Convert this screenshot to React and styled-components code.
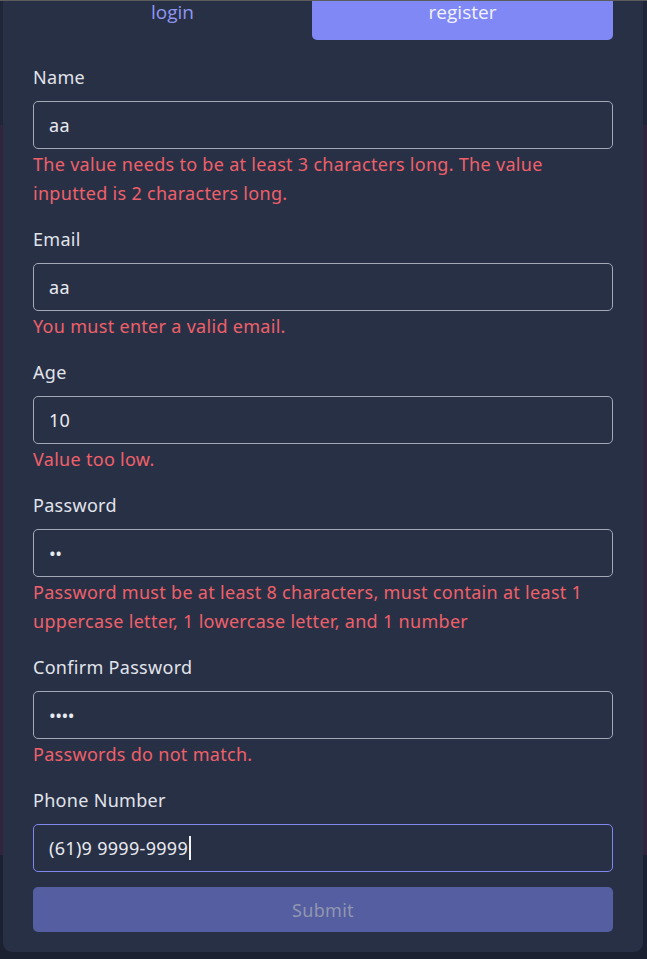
import React from "react";
import styled, { createGlobalStyle } from "styled-components";

const GlobalStyle = createGlobalStyle`
  html, body {
    margin: 0;
    padding: 0;
    background: #1b2130;
  }
  body {
    font-family: "Noto Sans", "Open Sans", sans-serif;
    border-top: 1px solid #5c5c5c;
  }
`;

// Backdrop behind the modal
const Backdrop = styled.div`
  width: 647px;
  height: 958px;
  box-sizing: border-box;
  padding: 0 4px 0 3px;
  background: linear-gradient(
    to bottom,
    #1f2637 0,
    #1f2637 124px,
    #31243d 124px,
    #31243d 854px,
    #1b2130 854px
  );
`;

const Modal = styled.div`
  background: #283046;
  border-radius: 0 0 9px 9px;
  padding: 0 30px 20px 30px;
  display: flex;
  flex-direction: column;
`;

const Tabs = styled.div`
  display: flex;
  height: 39px;
  margin-bottom: 24px;
`;

const Tab = styled.div`
  flex: ${p => (p.active ? 1 : "0 0 279px")};
  background: ${p => (p.active ? "#8088f6" : "transparent")};
  color: ${p => (p.active ? "#f2f3ff" : "#8f96f2")};
  border-radius: 0 0 5px 5px;
  font-family: "Open Sans", sans-serif;
  font-size: 19px;
  line-height: 25px;
  text-align: center;
  margin-top: -1px;
`;

const Form = styled.div`
  display: flex;
  flex-direction: column;
  gap: 18px;
`;

const Field = styled.div`
  display: flex;
  flex-direction: column;
`;

const Label = styled.div`
  color: #e1e4ea;
  font-size: 18px;
  letter-spacing: 0.3px;
  line-height: 27px;
  margin-bottom: 10px;
`;

const InputBox = styled.div`
  height: 48px;
  box-sizing: border-box;
  border: 1px solid ${p => (p.focused ? "#7f87ee" : "#a3a9b6")};
  border-radius: 5px;
  padding: 0 15px;
  display: flex;
  align-items: center;
  color: #e8eaef;
  font-size: 18px;
  letter-spacing: ${p => (p.dots ? "-0.5px" : "0.3px")};
`;

const Caret = styled.span`
  display: inline-block;
  width: 1.5px;
  height: 24px;
  background: #f2f2f2;
  margin-left: 1px;
`;

const Error = styled.div`
  color: #ef6069;
  font-size: 18px;
  letter-spacing: 0.3px;
  line-height: 29px;
  margin-top: 1px;
`;

const Submit = styled.button`
  margin-top: -3px;
  height: 45px;
  border: none;
  border-radius: 5px;
  background: #545ea0;
  color: #9196b0;
  font-family: "Noto Sans", sans-serif;
  font-size: 18px;
  letter-spacing: 0.3px;
`;

const fields = [
  {
    label: "Name",
    value: "aa",
    error:
      "The value needs to be at least 3 characters long. The value inputted is 2 characters long.",
  },
  { label: "Email", value: "aa", error: "You must enter a valid email." },
  { label: "Age", value: "10", error: "Value too low." },
  {
    label: "Password",
    value: "••",
    dots: true,
    error:
      "Password must be at least 8 characters, must contain at least 1 uppercase letter, 1 lowercase letter, and 1 number",
  },
  {
    label: "Confirm Password",
    value: "••••",
    dots: true,
    error: "Passwords do not match.",
  },
  { label: "Phone Number", value: "(61)9 9999-9999", focused: true },
];

const App = () => {
  return (
    <>
      <GlobalStyle />
      <Backdrop>
        <Modal>
          <Tabs>
            <Tab>login</Tab>
            <Tab active>register</Tab>
          </Tabs>
          <Form>
            {fields.map(f => (
              <Field key={f.label}>
                <Label>{f.label}</Label>
                <InputBox focused={f.focused} dots={f.dots}>
                  {f.value}
                  {f.focused && <Caret />}
                </InputBox>
                {f.error && <Error>{f.error}</Error>}
              </Field>
            ))}
            <Submit disabled>Submit</Submit>
          </Form>
        </Modal>
      </Backdrop>
    </>
  );
};

export default App;
